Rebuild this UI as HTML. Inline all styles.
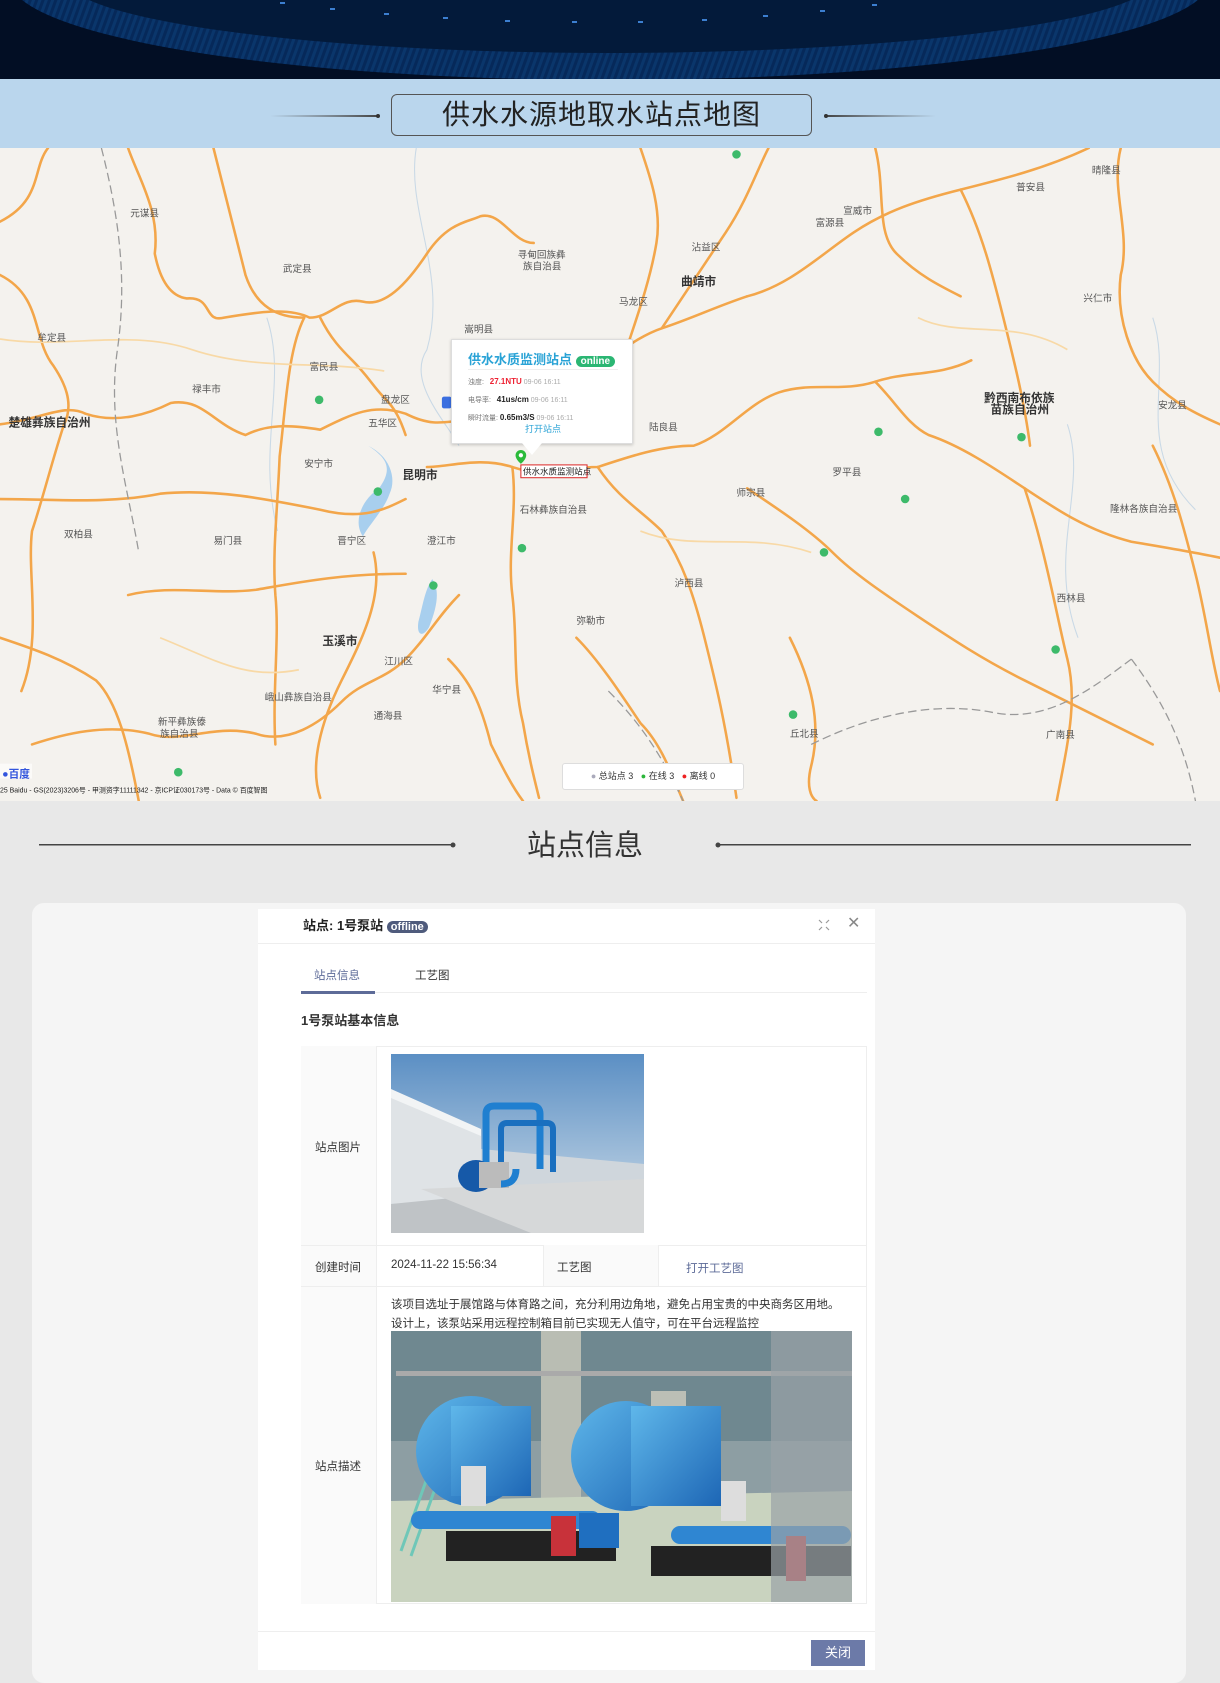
<!DOCTYPE html>
<html><head><meta charset="utf-8">
<style>
*{margin:0;padding:0;box-sizing:border-box}
body{width:1220px;height:1674px;overflow:hidden;background:#e8e8e8;font-family:"Liberation Sans","Noto Sans CJK SC",sans-serif;position:relative}
.abs{position:absolute}
#hdr{left:0;top:0;width:1220px;height:79px;background:#020d22;overflow:hidden}
#band{left:0;top:79px;width:1220px;height:69px;background:#bad6ed}
#tbox{left:391px;top:94px;width:421px;height:42px;border:1.5px solid #555;border-radius:6px;text-align:center;font-size:28px;line-height:40px;color:#222;letter-spacing:1px}
#map{left:0;top:148px;width:1220px;height:653px;background:#f4f2ee;overflow:hidden}
.card{left:32px;top:903px;width:1154px;height:780px;background:#f5f5f5;border-radius:12px}
.dlg{left:258px;top:909px;width:617px;height:761px;background:#fff}
.t13{font-size:11.5px;color:#333}
</style></head><body>
<div id="hdr" class="abs">
<svg width="1220" height="79">
<defs>
<radialGradient id="rg" cx="50%" cy="0%" r="60%"><stop offset="0" stop-color="#0a3a6e"/><stop offset="1" stop-color="#031a3a"/></radialGradient>
<pattern id="hatch" width="6" height="10" patternUnits="userSpaceOnUse" patternTransform="rotate(20)"><rect width="3" height="10" fill="#0e4580"/></pattern>
</defs>
<rect width="1220" height="79" fill="#020e24"/>
<ellipse cx="610" cy="-20" rx="600" ry="100" fill="#06295a"/>
<ellipse cx="610" cy="-20" rx="600" ry="100" fill="url(#hatch)" opacity=".45"/>
<ellipse cx="610" cy="-22" rx="545" ry="75" fill="url(#rg)"/>
<g fill="#3c7fd0"><rect x="280" y="2" width="5" height="2"/><rect x="330" y="8" width="5" height="2"/><rect x="384" y="13" width="5" height="2"/><rect x="443" y="17" width="5" height="2"/><rect x="505" y="20" width="5" height="2"/><rect x="572" y="21" width="5" height="2"/><rect x="638" y="21" width="5" height="2"/><rect x="702" y="19" width="5" height="2"/><rect x="763" y="15" width="5" height="2"/><rect x="820" y="10" width="5" height="2"/><rect x="872" y="4" width="5" height="2"/></g>
</svg>
</div>
<div id="band" class="abs">
<svg class="abs" style="left:0;top:0" width="1220" height="69"><defs><linearGradient id="lg1"><stop offset="0" stop-color="#555" stop-opacity="0"/><stop offset="1" stop-color="#444"/></linearGradient><linearGradient id="lg2"><stop offset="0" stop-color="#444"/><stop offset="1" stop-color="#555" stop-opacity="0"/></linearGradient></defs>
<rect x="270" y="36" width="108" height="2" fill="url(#lg1)"/><circle cx="378" cy="37" r="2" fill="#333"/>
<rect x="826" y="36" width="110" height="2" fill="url(#lg2)"/><circle cx="826" cy="37" r="2" fill="#333"/></svg>
</div>
<div id="tbox" class="abs">供水水源地取水站点地图</div>

<div id="map" class="abs">
<svg width="1220" height="653" viewBox="0 141 1143 612" preserveAspectRatio="none" style="position:absolute;left:0;top:0">
<g fill="none" stroke="#c9d9e6" stroke-width="1">
<path d="M390 141 C380 200 420 260 400 330 C380 360 420 400 430 420"/><path d="M250 300 C270 360 240 420 260 500"/><path d="M1000 400 C1020 460 980 520 1010 600"/><path d="M1080 300 C1100 360 1060 420 1120 480"/>
</g>
<path d="M345 420 C360 430 370 440 355 460 C340 470 330 490 340 505 C345 495 360 480 365 465 C372 450 365 430 345 420Z" fill="#a8cfee"/>
<path d="M405 545 C412 555 410 570 402 590 C396 600 390 598 392 585 C396 570 398 555 405 545Z" fill="#a8cfee"/>
<g fill="none" stroke="#f3a64a" stroke-width="2.4" stroke-linecap="round">
<path d="M0 210 C40 190 30 160 45 141"/><path d="M0 260 C40 280 30 320 50 345 C60 360 70 380 60 400 C50 430 40 470 30 500 C25 540 40 600 20 650"/>
<path d="M120 141 C130 170 150 200 145 240 C150 265 160 280 175 282 C200 280 190 305 210 300 C240 295 270 290 290 300 C310 300 320 280 340 285 C360 290 380 270 400 240 C420 210 440 210 450 205 C470 200 480 230 500 230"/>
<path d="M0 400 C40 395 60 380 80 390 C110 400 140 390 160 380 C190 375 200 400 230 410 C250 400 270 400 300 405 C330 390 350 380 380 390 C400 400 410 400 440 395 C470 380 500 370 530 360 C560 350 590 320 620 310 C650 300 670 290 700 280"/>
<path d="M285 300 C270 330 268 380 262 430 C260 480 255 520 258 560 C262 600 255 650 258 700"/>
<path d="M300 300 C310 320 320 330 330 340 C345 355 350 365 360 375 C370 385 375 395 380 410"/>
<path d="M0 470 C50 470 100 475 150 465 C200 460 250 470 300 480 C340 490 360 480 380 470"/>
<path d="M120 560 C160 550 200 560 240 555 C280 548 320 540 380 540"/>
<path d="M30 700 C60 690 100 680 140 690 C170 700 200 680 240 690 C270 700 300 680 320 660 C340 640 360 640 380 620 C400 600 410 580 430 560"/>
<path d="M350 520 C360 560 340 600 320 640 C300 680 290 720 300 750"/>
<path d="M400 440 C420 440 450 430 480 440 C510 450 530 440 560 440 C590 430 620 420 650 420 C680 410 700 380 730 370 C760 360 790 370 820 360 C850 350 880 355 910 340"/>
<path d="M480 440 C485 480 475 520 480 560 C485 600 480 640 490 680 C495 710 500 730 505 750"/>
<path d="M560 440 C580 470 600 480 620 500 C640 530 650 560 660 600 C670 640 680 680 690 750"/>
<path d="M620 310 C640 280 660 250 680 220 C700 190 710 160 720 141"/>
<path d="M600 141 C610 170 620 200 615 230 C610 260 600 290 590 320"/>
<path d="M700 280 C740 270 770 240 800 220 C830 200 860 190 900 180 C940 170 980 160 1020 141"/>
<path d="M820 360 C840 380 850 400 870 410 C900 420 930 440 960 460 C990 480 1020 500 1060 510 C1090 515 1120 520 1143 525"/>
<path d="M900 180 C920 220 930 260 940 300 C950 340 960 380 965 420"/>
<path d="M1050 141 C1040 180 1060 220 1050 260 C1045 300 1060 340 1080 360 C1100 380 1120 390 1143 400"/>
<path d="M700 460 C730 480 760 500 780 520 C800 540 830 560 860 580 C890 600 920 620 960 640 C1000 660 1040 680 1080 700"/>
<path d="M740 600 C760 640 770 680 760 720 C755 740 760 750 765 753"/>
<path d="M960 460 C980 520 990 580 1000 620 C1010 660 1000 700 990 753"/>
<path d="M1080 420 C1100 460 1110 500 1120 540 C1130 580 1135 620 1143 650"/>
<path d="M200 141 C210 180 220 220 230 260 C240 290 260 300 285 300"/>
<path d="M420 620 C440 640 450 660 460 700 C470 720 480 740 490 753"/>
<path d="M540 600 C560 620 580 650 600 680 C620 700 630 730 640 753"/>
<path d="M820 141 C830 180 820 220 840 240 C860 260 880 270 900 280"/>
<path d="M0 600 C30 610 60 620 90 640 C110 660 120 700 130 753"/>
</g>
<g fill="none" stroke="#f8d9a6" stroke-width="1.6">
<path d="M0 320 C60 330 120 310 180 330 C240 350 300 340 360 350"/><path d="M600 500 C650 520 700 500 760 520"/><path d="M860 300 C900 320 950 300 1000 330"/><path d="M150 600 C200 620 230 640 280 630"/>
</g>
<g fill="none" stroke="#999" stroke-width="1.2" stroke-dasharray="8 4">
<path d="M95 141 C110 200 120 260 110 330 C100 400 120 460 130 520"/><path d="M760 700 C820 670 880 660 930 670 C980 680 1020 650 1060 620"/><path d="M570 650 C600 680 620 710 640 753"/><path d="M1060 620 C1090 660 1110 700 1120 753"/>
</g>
<g font-size="9" fill="#555" font-family="Liberation Sans,Noto Sans CJK SC,sans-serif">
<text x="122" y="205">元谋县</text><text x="265" y="257">武定县</text><text x="35" y="322">牟定县</text><text x="290" y="349">富民县</text><text x="180" y="370">禄丰市</text><text x="357" y="380">盘龙区</text><text x="345" y="402">五华区</text><text x="285" y="440">安宁市</text><text x="60" y="506">双柏县</text><text x="200" y="512">易门县</text><text x="316" y="512">晋宁区</text><text x="400" y="512">澄江市</text><text x="487" y="483">石林彝族自治县</text><text x="360" y="625">江川区</text><text x="405" y="652">华宁县</text><text x="248" y="659">峨山彝族自治县</text><text x="350" y="676">通海县</text><text x="148" y="682">新平彝族傣</text><text x="150" y="693">族自治县</text><text x="485" y="244">寻甸回族彝</text><text x="490" y="255">族自治县</text><text x="580" y="288">马龙区</text><text x="648" y="237">沾益区</text><text x="435" y="314">嵩明县</text><text x="608" y="406">陆良县</text><text x="780" y="448">罗平县</text><text x="690" y="467">师宗县</text><text x="632" y="552">泸西县</text><text x="540" y="587">弥勒市</text><text x="740" y="693">丘北县</text><text x="790" y="203">宣威市</text><text x="764" y="214">富源县</text><text x="952" y="181">普安县</text><text x="1023" y="165">晴隆县</text><text x="1015" y="285">兴仁市</text><text x="1085" y="385">安龙县</text><text x="990" y="566">西林县</text><text x="980" y="694">广南县</text><text x="1040" y="482">隆林各族自治县</text>
</g>
<g font-size="11" fill="#333" font-weight="bold" font-family="Liberation Sans,Noto Sans CJK SC,sans-serif">
<text x="638" y="270">曲靖市</text><text x="377" y="451">昆明市</text><text x="302" y="607">玉溪市</text><text x="8" y="402">楚雄彝族自治州</text><text x="922" y="379">黔西南布依族</text><text x="928" y="390">苗族自治州</text>
</g>
<g fill="#3dba6a"><circle cx="690" cy="147" r="4"/><circle cx="299" cy="377" r="4"/><circle cx="354" cy="463" r="4"/><circle cx="489" cy="516" r="4"/><circle cx="406" cy="551" r="4"/><circle cx="823" cy="407" r="4"/><circle cx="957" cy="412" r="4"/><circle cx="848" cy="470" r="4"/><circle cx="772" cy="520" r="4"/><circle cx="989" cy="611" r="4"/><circle cx="743" cy="672" r="4"/><circle cx="167" cy="726" r="4"/></g>
<rect x="414" y="374" width="9" height="11" rx="2" fill="#3b6fe0"/>
<rect x="0" y="718" width="30" height="14" fill="#fff" opacity=".6"/>
<text x="2" y="731" font-size="10" fill="#3355dd" font-weight="bold">&#9679;百度</text>
<text x="0" y="745" font-size="6.5" fill="#222" font-family="Liberation Sans,sans-serif">25 Baidu - GS(2023)3206号 - 甲测资字11111342 - 京ICP证030173号 - Data © 百度智图</text>
<path d="M488 424 a5 5 0 0 1 5 5 c0 4 -5 8 -5 8 c0 0 -5 -4 -5 -8 a5 5 0 0 1 5 -5z" fill="#2bbb3a"/><circle cx="488" cy="429" r="2" fill="#fff"/>
<rect x="488" y="438" width="62" height="12" fill="#fff" stroke="#d33" stroke-width="1"/>
<text x="490" y="447" font-size="8" fill="#222">供水水质监测站点</text>
</svg>
<div class="abs" style="left:451px;top:191px;width:182px;height:105px;background:#fff;border:1px solid #ddd;box-shadow:0 1px 3px rgba(0,0,0,.2)">
<div class="abs" style="left:16px;top:9px;font-size:13px;font-weight:bold;color:#2aa3d6;white-space:nowrap">供水水质监测站点 <span style="background:#2bb673;color:#fff;border-radius:8px;font-size:10px;padding:0 5px">online</span></div>
<div class="abs" style="left:16px;top:29px;width:150px;border-top:1px solid #eee"></div>
<div class="abs" style="left:16px;top:33px;font-size:7px;color:#777;white-space:nowrap;line-height:17px">浊度: &nbsp; <b style="color:#e23;font-size:8px">27.1NTU</b> <span style="color:#aaa">09-06 16:11</span><br>电导率: &nbsp; <b style="color:#222;font-size:8px">41us/cm</b> <span style="color:#aaa">09-06 16:11</span><br>瞬时流量: <b style="color:#222;font-size:8px">0.65m3/S</b> <span style="color:#aaa">09-06 16:11</span></div>
<div class="abs" style="left:0;width:182px;top:82px;text-align:center;font-size:9px;color:#2aa3d6">打开站点</div>
</div>
<div class="abs" style="left:522px;top:295px;width:0;height:0;border-left:10px solid transparent;border-right:10px solid transparent;border-top:12px solid #fff"></div>
<div class="abs" style="left:562px;top:615px;width:182px;height:27px;background:#fff;border:1px solid #ddd;border-radius:3px;font-size:9px;color:#333;line-height:25px;text-align:center;white-space:nowrap"><span style="color:#aab">●</span> 总站点 3 &nbsp; <span style="color:#2bb63a">●</span> 在线 3 &nbsp; <span style="color:#e22">●</span> 离线 0</div>
</div>

<svg class="abs" style="left:0;top:835px" width="1220" height="20"><rect x="39" y="9" width="415" height="1.5" fill="#444"/><circle cx="453" cy="10" r="2.5" fill="#444"/><rect x="718" y="9" width="473" height="1.5" fill="#444"/><circle cx="718" cy="10" r="2.5" fill="#444"/></svg>
<div class="abs" style="left:510px;top:822px;width:150px;text-align:center;font-size:29px;color:#333">站点信息</div>

<div class="abs card"></div>
<div class="abs dlg">
<div class="abs" style="left:45px;top:6px;font-size:13px;font-weight:bold;color:#222;white-space:nowrap">站点: 1号泵站 <span style="background:#4f5b7c;color:#fff;border-radius:8px;font-size:11px;padding:0 4px">offline</span></div>
<svg class="abs" style="left:560px;top:10px" width="12" height="12"><g stroke="#999" stroke-width="1.2"><path d="M1 1 L4 4 M11 1 L8 4 M1 11 L4 8 M11 11 L8 8"/></g></svg>
<div class="abs" style="left:589px;top:4px;font-size:16px;color:#888">✕</div>
<div class="abs" style="left:0;top:34px;width:617px;border-top:1px solid #eee"></div>
<div class="abs" style="left:56px;top:58px;font-size:11.5px;color:#5d6b98">站点信息</div>
<div class="abs" style="left:157px;top:58px;font-size:11.5px;color:#333">工艺图</div>
<div class="abs" style="left:43px;top:83px;width:566px;border-top:1px solid #eee"></div>
<div class="abs" style="left:43px;top:82px;width:74px;height:3px;background:#5d6b98"></div>
<div class="abs" style="left:43px;top:101px;font-size:13px;font-weight:bold;color:#333">1号泵站基本信息</div>
<div class="abs" style="left:43px;top:137px;width:566px;height:558px;border:1px solid #eee"></div>
<div class="abs" style="left:43px;top:137px;width:76px;height:558px;background:#fafafa;border-right:1px solid #eee"></div>
<div class="abs" style="left:43px;top:336px;width:566px;border-top:1px solid #eee"></div>
<div class="abs" style="left:43px;top:377px;width:566px;border-top:1px solid #eee"></div>
<div class="abs" style="left:285px;top:336px;width:116px;height:41px;background:#fafafa;border-left:1px solid #eee;border-right:1px solid #eee"></div>
<div class="abs t13" style="left:57px;top:230px">站点图片</div>
<div class="abs t13" style="left:57px;top:350px">创建时间</div>
<div class="abs t13" style="left:133px;top:350px">2024-11-22 15:56:34</div>
<div class="abs t13" style="left:299px;top:350px">工艺图</div>
<div class="abs t13" style="left:428px;top:351px;color:#5d6b98">打开工艺图</div>
<div class="abs t13" style="left:57px;top:549px">站点描述</div>
<div class="abs" style="left:133px;top:387px;font-size:11.5px;color:#333;line-height:19px;white-space:nowrap">该项目选址于展馆路与体育路之间，充分利用边角地，避免占用宝贵的中央商务区用地。<br>设计上，该泵站采用远程控制箱目前已实现无人值守，可在平台远程监控</div>
<svg class="abs" style="left:133px;top:145px" width="253" height="179">
<defs><linearGradient id="sky" x1="0" y1="0" x2="0" y2="1"><stop offset="0" stop-color="#5b8fc4"/><stop offset="1" stop-color="#d3e0ea"/></linearGradient></defs>
<rect width="253" height="179" fill="url(#sky)"/>
<polygon points="0,40 90,80 90,145 0,150" fill="#dfe3e6"/><polygon points="0,35 90,75 90,82 0,44" fill="#f2f4f5"/>
<polygon points="90,95 253,110 253,145 90,140" fill="#cfd6dc"/>
<polygon points="0,150 253,125 253,179 0,179" fill="#bfc3c6"/><polygon points="30,135 253,125 253,179 140,179" fill="#d6d8d9"/>
<path d="M95 110 V60 q0-8 8-8 h38 q8 0 8 8 V115" fill="none" stroke="#1f7fd0" stroke-width="7"/>
<path d="M110 110 V75 q0-6 6-6 h40 q6 0 6 6 V118" fill="none" stroke="#1a6fbf" stroke-width="6"/>
<ellipse cx="85" cy="122" rx="18" ry="16" fill="#1659a8"/><rect x="88" y="108" width="30" height="26" fill="#bbb"/>
<path d="M110 130 q15 0 15 -15" stroke="#1f7fd0" stroke-width="7" fill="none"/>
</svg>
<svg class="abs" style="left:133px;top:422px" width="461" height="271">
<defs><linearGradient id="t" x1="0" y1="0" x2="1" y2="1"><stop offset="0" stop-color="#5fb7ea"/><stop offset="1" stop-color="#1d66b5"/></linearGradient></defs>
<rect width="461" height="271" fill="#8d9ea3"/>
<rect y="0" width="461" height="110" fill="#6f8890"/>
<rect x="150" y="0" width="40" height="210" fill="#b9bdb3"/><rect x="260" y="60" width="35" height="150" fill="#bcbfb6"/>
<polygon points="0,170 461,160 461,271 0,271" fill="#c9d3bf"/>
<path d="M10 220 L60 80" stroke="#6fc7b8" stroke-width="3"/><path d="M20 225 L70 85" stroke="#6fc7b8" stroke-width="3"/>
<rect x="5" y="40" width="461" height="5" fill="#aaa"/>
<ellipse cx="80" cy="120" rx="55" ry="55" fill="url(#t)"/><rect x="60" y="75" width="80" height="90" fill="url(#t)"/>
<ellipse cx="235" cy="125" rx="55" ry="55" fill="url(#t)"/><rect x="240" y="75" width="90" height="100" fill="url(#t)"/>
<rect x="55" y="200" width="170" height="30" fill="#222"/><rect x="260" y="215" width="200" height="30" fill="#222"/>
<rect x="20" y="180" width="190" height="18" rx="9" fill="#2f86d2"/><rect x="160" y="185" width="25" height="40" fill="#c8323a"/><rect x="188" y="182" width="40" height="35" fill="#1f6fc0"/>
<rect x="280" y="195" width="180" height="18" rx="9" fill="#2f86d2"/><rect x="395" y="205" width="20" height="45" fill="#c8323a"/>
<rect x="70" y="135" width="25" height="40" fill="#ddd"/><rect x="330" y="150" width="25" height="40" fill="#ddd"/>
<rect x="380" y="0" width="81" height="271" fill="#9aa3a6" opacity=".7"/>
</svg>
<div class="abs" style="left:0;top:722px;width:617px;border-top:1px solid #eee"></div>
<div class="abs" style="left:553px;top:731px;width:54px;height:26px;background:#6c7aa8;color:#fff;font-size:13px;line-height:26px;text-align:center">关闭</div>
</div>
</body></html>
